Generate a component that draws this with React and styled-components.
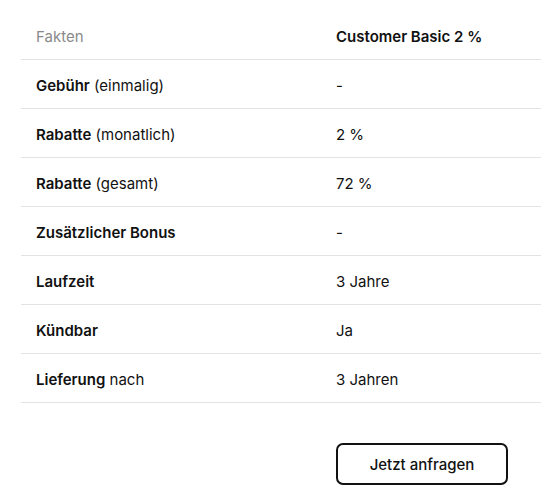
import React from 'react';
import styled, { createGlobalStyle } from 'styled-components';

const GlobalStyle = createGlobalStyle`
  html, body {
    margin: 0;
    padding: 0;
    background: #fff;
    overflow: hidden;
  }
  body {
    font-family: Inter, "Noto Sans", sans-serif;
    color: #111;
  }
`;

const rows = [
  { label: 'Gebühr', note: '(einmalig)', value: '-' },
  { label: 'Rabatte', note: '(monatlich)', value: '2 %' },
  { label: 'Rabatte', note: '(gesamt)', value: '72 %' },
  { label: 'Zusätzlicher Bonus', value: '-' },
  { label: 'Laufzeit', value: '3 Jahre' },
  { label: 'Kündbar', value: 'Ja' },
  { label: 'Lieferung', note: 'nach', value: '3 Jahren' },
];

export default function App() {
  return (
    <>
      <GlobalStyle />
      <Wrapper>
        <Table>
          <Row>
            <HeadCell muted>Fakten</HeadCell>
            <HeadCell>Customer Basic 2 %</HeadCell>
          </Row>
          {rows.map((r, i) => (
            <Row key={i}>
              <Cell>
                <span>
                  <strong>{r.label}</strong>
                  {r.note ? ` ${r.note}` : ''}
                </span>
              </Cell>
              <Cell>{r.value}</Cell>
            </Row>
          ))}
        </Table>
        <Actions>
          <Button>Jetzt anfragen</Button>
        </Actions>
      </Wrapper>
    </>
  );
}

const Wrapper = styled.div`
  padding: 11px 0 0 21px;
`;

const Table = styled.div`
  display: flex;
  flex-direction: column;
`;

const Row = styled.div`
  display: grid;
  grid-template-columns: 300px 1fr;
  height: 48px;
  border-bottom: 1px solid #e3e3e3;
`;

const Cell = styled.div`
  display: flex;
  align-items: center;
  padding: 3px 15px 0;
  font-size: 15px;
  font-weight: 400;
  white-space: nowrap;

  strong {
    font-weight: 600;
  }
`;

const HeadCell = styled(Cell)`
  color: ${props => (props.muted ? '#8a8a8a' : '#111')};
  font-weight: ${props => (props.muted ? 400 : 600)};
`;

const Actions = styled.div`
  display: flex;
  padding-left: 315px;
  margin-top: 40px;
`;

const Button = styled.button`
  width: 172px;
  height: 42px;
  border: 2px solid #111;
  border-radius: 7px;
  background: #fff;
  font-family: inherit;
  font-size: 15px;
  font-weight: 500;
  color: #111;
  cursor: pointer;
`;
